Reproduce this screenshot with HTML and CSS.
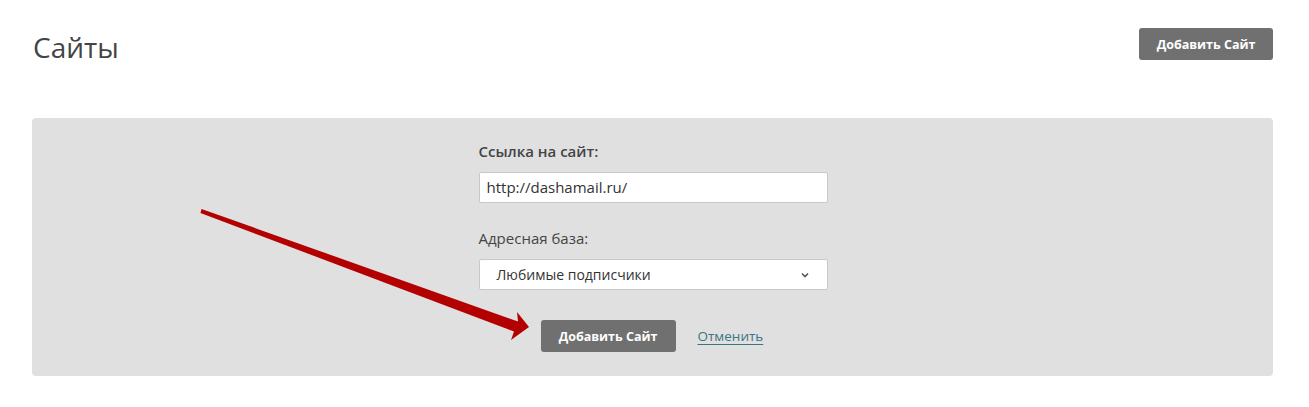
FILE: index.html
```html
<!DOCTYPE html>
<html lang="ru">
<head>
<meta charset="utf-8">
<link rel="stylesheet" href="styles.css">
</head>
<body>
<div class="page">
  <header class="header">
    <h1 class="title">Сайты</h1>
    <button class="btn">Добавить Сайт</button>
  </header>
  <section class="card">
    <form class="form">
      <label class="label label-strong">Ссылка на сайт:</label>
      <div class="input">http://dashamail.ru/</div>
      <label class="label">Адресная база:</label>
      <div class="select">
        <span>Любимые подписчики</span>
        <svg class="chev" width="8" height="6" viewBox="0 0 8 6"><path d="M1 1.5 L4 4.5 L7 1.5" fill="none" stroke="#555" stroke-width="1.6"/></svg>
      </div>
      <div class="actions">
        <button class="btn btn-wide" type="button">Добавить Сайт</button>
        <a class="cancel" href="#">Отменить</a>
      </div>
    </form>
    <svg class="arrow" width="1241" height="258" viewBox="0 0 1241 258">
      <polygon points="169.5,91 168.5,95 482,213.5 479,222 497,209 485,194 486,203.5" fill="#b30000"/>
    </svg>
  </section>
</div>
</body>
</html>
```
FILE: styles.css
```css
* { box-sizing: border-box; }
body {
  margin: 0;
  background: #fff;
  font-family: "Open Sans", "Noto Sans", sans-serif;
  color: #444;
}
.page {
  padding: 28px 36px 0 32px;
}
.header {
  display: flex;
  justify-content: space-between;
  align-items: flex-start;
  height: 90px;
}
.title {
  margin: 0;
  padding-left: 1px;
  font-size: 28px;
  font-weight: 400;
  line-height: 38px;
  color: #444;
}
.btn {
  height: 32px;
  padding: 0;
  border: none;
  border-radius: 3px;
  background: #707070;
  color: #fff;
  font-family: "Open Sans", sans-serif;
  font-weight: 700;
  font-size: 12.5px;
  width: 134px;
  white-space: nowrap;
}
.btn-wide { width: 135px; }
.card {
  position: relative;
  height: 258px;
  background: #e0e0e0;
  border-radius: 4px;
  display: flex;
  justify-content: center;
  padding-top: 22px;
}
.form {
  width: 349px;
  margin-left: 1px;
  display: flex;
  flex-direction: column;
}
.label {
  font-size: 15px;
  line-height: 22px;
  color: #444;
}
.label-strong { font-weight: 600; }
.input {
  margin-top: 10px;
  margin-bottom: 24px;
  height: 31px;
  background: #fff;
  border: 1px solid #c8c8c8;
  border-radius: 2px;
  padding: 0 7px;
  font-size: 15px;
  line-height: 29px;
  color: #333;
}
.select {
  margin-top: 10px;
  height: 31px;
  background: #fff;
  border: 1px solid #c8c8c8;
  border-radius: 2px;
  padding: 0 18px 0 17px;
  font-size: 14px;
  line-height: 29px;
  color: #333;
  display: flex;
  justify-content: space-between;
  align-items: center;
}
.actions {
  margin-top: 30px;
  margin-left: 62px;
  display: flex;
  align-items: center;
  gap: 22px;
}
.cancel {
  color: #3b7583;
  font-size: 13.5px;
  text-decoration: underline;
  text-underline-offset: 3px;
}
.arrow {
  position: absolute;
  left: 0;
  top: 0;
  pointer-events: none;
}
```
